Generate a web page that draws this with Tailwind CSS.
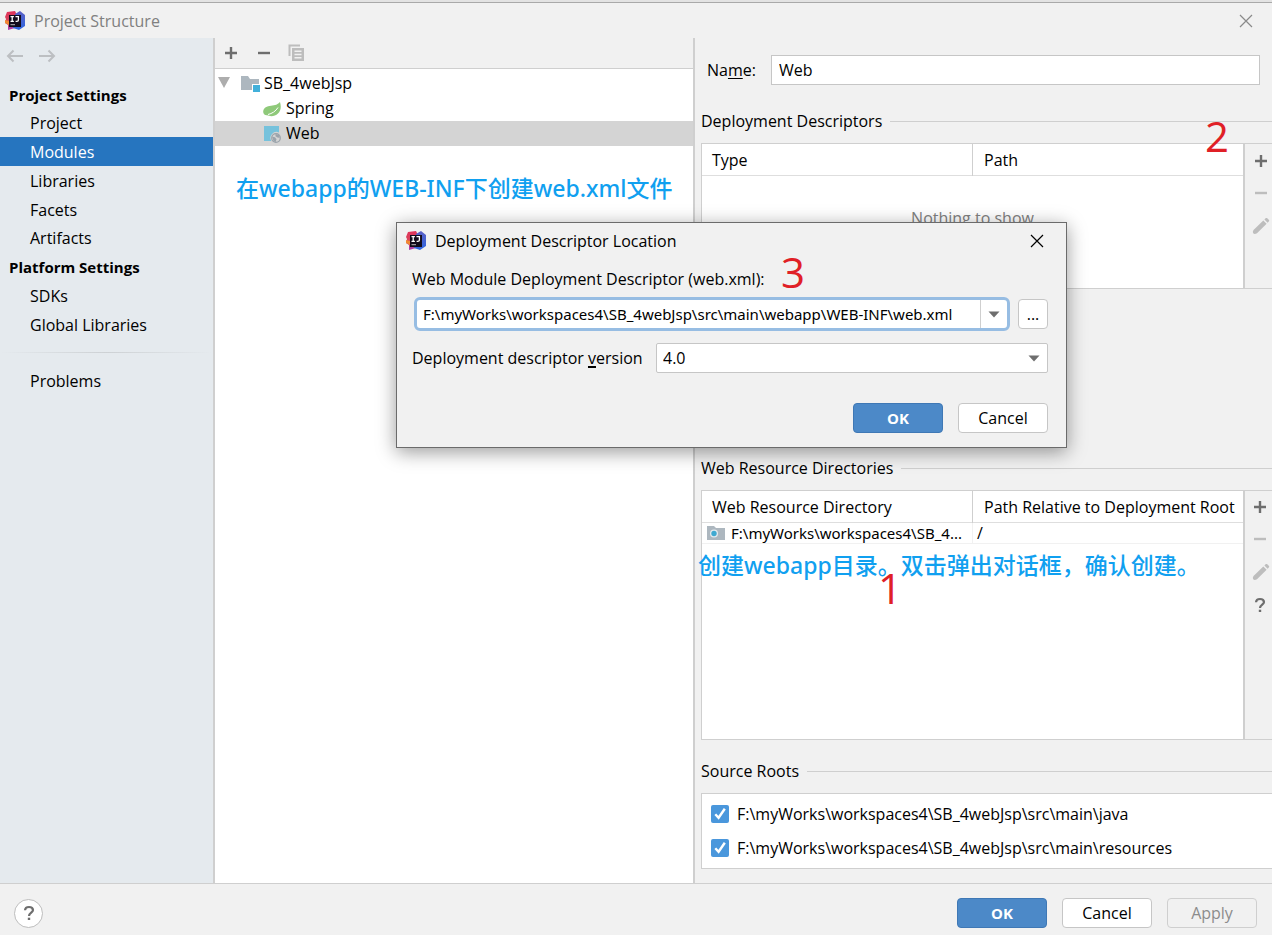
<!DOCTYPE html>
<html lang="en">
<head>
    <meta charset="UTF-8">
    <meta name="viewport" content="width=device-width, initial-scale=1.0">
    <title>Project Structure</title>
    <script src="https://cdn.jsdelivr.net/npm/@tailwindcss/browser@4"></script>
</head>
<body class="relative flex h-screen flex-col overflow-hidden bg-[#f1f1f1] font-['Open_Sans','Noto_Sans_CJK_SC',sans-serif] text-[16px] leading-5 text-black">

    <!-- shared icons -->
    <svg class="absolute size-0">
        <defs>
            <linearGradient id="ij-left" x1="0" y1="0" x2="0" y2="1">
                <stop offset="0" stop-color="#e0325c"/>
                <stop offset=".5" stop-color="#d8455a"/>
                <stop offset="1" stop-color="#a33bb5"/>
            </linearGradient>
            <linearGradient id="ij-right" x1="0" y1="0" x2="0" y2="1">
                <stop offset="0" stop-color="#5a5fc4"/>
                <stop offset="1" stop-color="#2f66e0"/>
            </linearGradient>
        </defs>
        <symbol id="idea" viewBox="0 0 20 20">
            <path fill="url(#ij-left)" d="M2 1l8-1 2 4-2 13-7 2V14L0 12l1-4-1-2z"/>
            <path fill="#f08a33" d="M0 9l4 1v4l-4-2z"/>
            <path fill="url(#ij-right)" d="M10 3l5-3 5 4v11l-6 4-6-2z"/>
            <path fill="#120c1c" d="M4 4h12v12H4z"/>
            <path fill="none" stroke="#fff" stroke-width="1.3" d="M5.500 5.700h3.400M7.200 5.700v4.600M5.500 10.300h3.400M10.500 5.700h2.900v3.200q0 1.400-1.600 1.400h-1.200"/>
            <path fill="#bbb" d="M5.500 13.200h4.500v1H5.500z"/>
        </symbol>
        <symbol id="plus" viewBox="0 0 14 14">
            <path fill="none" stroke="currentColor" stroke-width="2.4" d="M7 1v12M1 7h12"/>
        </symbol>
        <symbol id="minus" viewBox="0 0 14 14">
            <path fill="none" stroke="currentColor" stroke-width="2.4" d="M1 7h12"/>
        </symbol>
        <symbol id="pencil" viewBox="0 0 18 18">
            <path fill="currentColor" d="M11.300 3.400l3.300 3.300L5 16.300q-2.500 1.500-3.800 0-.9-1.500.3-3.300zM12.400 2.400l1.500-1.300q.6-.4 1.100 0l2 2q.4.600 0 1.100l-1.400 1.500z"/>
        </symbol>
        <symbol id="question" viewBox="0 0 12 16">
            <path fill="none" stroke="currentColor" stroke-width="2.2" d="M2 5.200Q2.200 2 6 2t4 3.100c0 2.400-4 2.800-4 6"/>
            <path fill="currentColor" d="M4.800 12.700h2.400V15H4.800z"/>
        </symbol>
        <symbol id="close" viewBox="0 0 14 14">
            <path fill="none" stroke="currentColor" stroke-width="1.2" d="M1 1l12 12M13 1L1 13"/>
        </symbol>
        <symbol id="caret" viewBox="0 0 12 7">
            <path fill="currentColor" d="M.5.5h11L6 6.500z"/>
        </symbol>
        <symbol id="tick" viewBox="0 0 18 18">
            <path fill="none" stroke="#fff" stroke-width="2.4" d="M4.300 9.200l3.300 3.600 6.200-9"/>
        </symbol>
    </svg>

    <!-- title bar -->
    <div class="h-[2px] shrink-0 bg-[#e3e3e3]"></div>
    <header class="flex h-9 shrink-0 items-center border-t border-[#a9a9a9] px-[5px]">
        <svg class="size-5"><use href="#idea"/></svg>
        <h1 class="ml-[9px] grow text-[#808080]">Project Structure</h1>
        <button aria-label="Close" class="mr-[14px] text-[#8a8a8a]"><svg class="size-[14px]"><use href="#close"/></svg></button>
    </header>

    <div class="flex min-h-0 grow">

        <!-- settings list -->
        <nav class="w-[215px] shrink-0 border-r-2 border-[#cfcfcf] bg-[#e5eaee]">
            <div class="flex h-[42px] items-start gap-4 px-[6px] pt-[11px] text-[#bcbfc2]">
                <button aria-label="Back"><svg class="h-[14px] w-[17px]" viewBox="0 0 17 14" fill="none" stroke="currentColor" stroke-width="2"><path d="M17 7H2M7.500 1.500L2 7l5.500 5.500"/></svg></button>
                <button aria-label="Forward"><svg class="h-[14px] w-[17px]" viewBox="0 0 17 14" fill="none" stroke="currentColor" stroke-width="2"><path d="M0 7h15M9.500 1.500L15 7l-5.500 5.500"/></svg></button>
            </div>
            <h2 class="flex h-7 items-center px-[9px] pt-[2px] text-[15px] font-bold">Project Settings</h2>
            <a href="#" class="flex h-[29px] items-center px-[30px]">Project</a>
            <a href="#" class="flex h-[29px] items-center bg-[#2675bf] px-[30px] text-white">Modules</a>
            <a href="#" class="flex h-[29px] items-center px-[30px]">Libraries</a>
            <a href="#" class="flex h-[29px] items-center px-[30px]">Facets</a>
            <a href="#" class="flex h-[29px] items-center px-[30px] pb-px">Artifacts</a>
            <h2 class="flex h-7 items-center px-[9px] text-[15px] font-bold">Platform Settings</h2>
            <a href="#" class="flex h-[29px] items-center px-[30px]">SDKs</a>
            <a href="#" class="flex h-[29px] items-center px-[30px]">Global Libraries</a>
            <div class="my-[13px] h-px bg-linear-to-r from-transparent via-[#cdd1d4] to-transparent"></div>
            <a href="#" class="flex h-[29px] items-center px-[30px]">Problems</a>
        </nav>

        <!-- module tree -->
        <section class="flex w-[480px] shrink-0 flex-col border-r-2 border-[#cfcfcf] bg-white">
            <div class="flex h-[31px] shrink-0 items-center gap-[19px] border-b border-[#cfcfcf] bg-[#f1f1f1] px-[9px] text-[#6e6e6e]">
                <button aria-label="Add"><svg class="size-[14px]"><use href="#plus"/></svg></button>
                <button aria-label="Remove"><svg class="size-[14px]"><use href="#minus"/></svg></button>
                <button aria-label="Copy" class="-ml-[2px] pb-[2px] text-[#bdbdbd]">
                    <svg class="size-[17px]" viewBox="0 0 17 17"><path fill="none" stroke="currentColor" stroke-width="2" d="M1.500 12V1.500H12"/><path fill="currentColor" fill-rule="evenodd" d="M4 4h12v13H4zM6.500 6.500v1.400h7V6.500zM6.500 9.800v1.400h7V9.800zM6.500 13v1.400h7V13z"/></svg>
                </button>
            </div>
            <ul class="pt-[2px]">
                <li class="flex h-[25px] items-center pb-[2px] pl-[3px]">
                    <svg class="h-[11px] w-3" viewBox="0 0 12 11"><path fill="#adadad" d="M0 0h12L6 11z"/></svg>
                    <svg class="mt-[2px] ml-[11px] size-[19px]" viewBox="0 0 19 19"><path fill="#adb7bf" d="M0 2h7l2 3h9v5h-7v6H0z"/><path fill="#42b0da" d="M12 11h7v7h-7z"/></svg>
                    <span class="ml-1">SB_4webJsp</span>
                </li>
                <li class="flex h-[25px] items-center pb-[2px] pl-12">
                    <svg class="mt-[2px] size-[18px]" viewBox="0 0 18 18"><path fill="#8fc97a" d="M17 2c1.500 5 .7 9-2 11.500-3 3-7.500 3.200-11 1.800C1.500 15.500 0 13.500.2 11.500.6 7.500 4 6.300 8 5.800 12 5.300 15 4.500 17 2z"/><path fill="none" stroke="#fff" d="M5 14.500C9 13.500 12.500 11.500 15 7.500"/></svg>
                    <span class="ml-[5px]">Spring</span>
                </li>
                <li class="flex h-[25px] items-center bg-[#d4d4d4] pb-[2px] pl-12">
                    <svg class="mt-[2px] size-[18px]" viewBox="0 0 18 18"><path fill="#76c2dc" d="M1 1h15v6.500A6 6 0 0 0 8.300 16H1z"/><circle cx="13" cy="13" r="4.300" fill="#d4d4d4" stroke="#9aa3ab" stroke-width="1.200"/><path fill="#9aa3ab" d="M9 11.500l3 .7 1.500 2-1 3-2-1.200zM12.500 9l3.500.8 1 2.700-2 .3-2.500-1.500z"/></svg>
                    <span class="ml-[5px]">Web</span>
                </li>
            </ul>
        </section>

        <!-- facet editor -->
        <main class="flex min-w-0 grow flex-col pt-[17px] pb-[14px] pl-[6px]">
            <div class="mr-3 flex items-center">
                <label for="name" class="w-[70px] pl-[6px]">Na<u class="underline-offset-2">m</u>e:</label>
                <input id="name" value="Web" class="h-[30px] min-w-0 grow border border-[#c6c6c6] bg-white px-[7px] outline-none">
            </div>

            <section class="mt-6 flex grow flex-col">
                <div class="flex h-6 items-center gap-2"><h2>Deployment Descriptors</h2><div class="h-px grow bg-[#cfcfcf]"></div></div>
                <div class="mt-[10px] flex h-[146px] border-y border-l border-[#cfcfcf]">
                    <div class="relative min-w-0 grow border-r-2 border-[#cfcfcf] bg-white">
                        <table class="w-full table-fixed text-left">
                            <thead>
                                <tr class="h-[31px] border-b border-[#dedede]">
                                    <th class="w-1/2 border-r border-[#cfcfcf] pt-px pl-[10px] font-normal">Type</th>
                                    <th class="pt-px pl-[11px] font-normal">Path</th>
                                </tr>
                            </thead>
                        </table>
                        <p class="mt-8 text-center text-[#808080]">Nothing to show</p>
                    </div>
                    <div class="flex w-[27px] shrink-0 flex-col items-end gap-[18px] pt-[10px] pr-1 text-[#bdbdbd]">
                        <button aria-label="Add descriptor" class="text-[#6e6e6e]"><svg class="size-[14px]"><use href="#plus"/></svg></button>
                        <button aria-label="Remove descriptor"><svg class="size-[14px]"><use href="#minus"/></svg></button>
                        <button aria-label="Edit descriptor" class="-mt-px -mr-[2px]"><svg class="size-[18px]"><use href="#pencil"/></svg></button>
                    </div>
                </div>
            </section>

            <section>
                <div class="flex h-6 items-center gap-2"><h2>Web Resource Directories</h2><div class="h-px grow bg-[#cfcfcf]"></div></div>
                <div class="mt-[10px] flex h-[250px] border-y border-l border-[#cfcfcf]">
                    <div class="min-w-0 grow border-r-2 border-[#cfcfcf] bg-white">
                        <table class="w-full table-fixed text-left">
                            <thead>
                                <tr class="h-[31px] border-b border-[#dedede]">
                                    <th class="w-1/2 border-r border-[#cfcfcf] pt-px pl-[10px] font-normal">Web Resource Directory</th>
                                    <th class="pt-px pl-[11px] font-normal whitespace-nowrap">Path Relative to Deployment Root</th>
                                </tr>
                            </thead>
                            <tbody>
                                <tr class="h-[21px] border-b border-[#f1f1f1]">
                                    <td class="border-r border-[#f1f1f1] pl-[5px]">
                                        <div class="flex items-center gap-[6px]">
                                            <svg class="h-[14px] w-[18px] shrink-0" viewBox="0 0 18 14"><path fill="#adb7bf" d="M0 0h7l2 2h9v12H0z"/><circle cx="7" cy="7.500" r="4" fill="#e4eaee"/><circle cx="7" cy="7.500" r="2.700" fill="#3fa9d1"/></svg>
                                            <span class="font-['Noto_Sans',sans-serif] text-[15px] whitespace-nowrap">F:\myWorks\workspaces4\SB_4...</span>
                                        </div>
                                    </td>
                                    <td class="pl-1">/</td>
                                </tr>
                            </tbody>
                        </table>
                    </div>
                    <div class="flex w-[27px] shrink-0 flex-col items-end gap-[18px] pt-[9px] pr-[5px] text-[#bdbdbd]">
                        <button aria-label="Add directory" class="text-[#6e6e6e]"><svg class="size-[14px]"><use href="#plus"/></svg></button>
                        <button aria-label="Remove directory"><svg class="size-[14px]"><use href="#minus"/></svg></button>
                        <button aria-label="Edit directory" class="-mt-px -mr-[3px]"><svg class="size-[18px]"><use href="#pencil"/></svg></button>
                        <button aria-label="Directory help" class="-mt-[2px] text-[#6e6e6e]"><svg class="h-4 w-[14px]"><use href="#question"/></svg></button>
                    </div>
                </div>
            </section>

            <section class="mt-[19px]">
                <div class="flex h-6 items-center gap-2"><h2>Source Roots</h2><div class="h-px grow bg-[#cfcfcf]"></div></div>
                <div class="mt-[10px] flex flex-col gap-[14px] border-y border-l border-[#cfcfcf] bg-white px-[9px] py-[10px]">
                    <label class="flex items-center gap-2">
                        <span class="grid"><input type="checkbox" checked class="col-start-1 row-start-1 size-[18px] appearance-none rounded-xs bg-[#4a97dc]"><svg class="pointer-events-none col-start-1 row-start-1 size-[18px]"><use href="#tick"/></svg></span>
                        F:\myWorks\workspaces4\SB_4webJsp\src\main\java
                    </label>
                    <label class="flex items-center gap-2">
                        <span class="grid"><input type="checkbox" checked class="col-start-1 row-start-1 size-[18px] appearance-none rounded-xs bg-[#4a97dc]"><svg class="pointer-events-none col-start-1 row-start-1 size-[18px]"><use href="#tick"/></svg></span>
                        F:\myWorks\workspaces4\SB_4webJsp\src\main\resources
                    </label>
                </div>
            </section>
        </main>
    </div>

    <!-- bottom buttons -->
    <footer class="flex h-[52px] shrink-0 items-center gap-[15px] border-t border-[#cfcfcf] pt-[11px] pr-[15px] pb-1 pl-[14px]">
        <button aria-label="Help" class="mr-auto flex size-[29px] items-center justify-center rounded-full border border-[#bdbdbd] bg-white text-[#6e6e6e]"><svg class="h-4 w-3"><use href="#question"/></svg></button>
        <button class="h-[30px] w-[90px] rounded border border-[#3f78b5] bg-[#4c89c8] text-[15px] font-bold text-white">OK</button>
        <button class="h-[30px] w-[90px] rounded border border-[#c6c6c6] bg-white">Cancel</button>
        <button disabled class="h-[30px] w-[90px] rounded border border-[#cfcfcf] text-[#8c8c8c]">Apply</button>
    </footer>

    <!-- descriptor dialog -->
    <div role="dialog" aria-labelledby="dialog-title" class="absolute top-[222px] left-[396px] w-[671px] border border-[#6b6b6b] bg-[#f1f1f1] shadow-[0_4px_18px_rgba(0,0,0,0.4)]">
        <div class="flex h-9 items-center pr-[22px] pl-[9px]">
            <svg class="size-5"><use href="#idea"/></svg>
            <h2 id="dialog-title" class="ml-[9px] grow">Deployment Descriptor Location</h2>
            <button aria-label="Close dialog"><svg class="size-[14px]"><use href="#close"/></svg></button>
        </div>
        <div class="px-[15px] pt-[10px] pb-[14px]">
            <label for="location" class="block">Web Module Deployment Descriptor (web.xml):</label>
            <div class="mt-2 flex items-center justify-between pr-[3px] pl-[2px]">
                <div class="flex h-[34px] w-[596px] rounded-md border-3 border-[#97bde3] bg-white">
                    <input id="location" value="F:\myWorks\workspaces4\SB_4webJsp\src\main\webapp\WEB-INF\web.xml" class="min-w-0 grow pl-[6px] font-['Noto_Sans',sans-serif] text-[15px] outline-none">
                    <button aria-label="Recent locations" class="flex w-[27px] shrink-0 items-center justify-center border-l border-[#cfcfcf] text-[#6e6e6e]"><svg class="h-[7px] w-3"><use href="#caret"/></svg></button>
                </div>
                <button aria-label="Browse" class="h-[30px] w-[30px] rounded border border-[#c6c6c6] bg-white">...</button>
            </div>
            <div class="mt-3 flex items-center pr-[3px]">
                <label for="version" class="w-[244px]">Deployment descriptor <u class="decoration-2 underline-offset-2">v</u>ersion</label>
                <div class="relative grow">
                    <select id="version" class="h-[30px] w-full appearance-none rounded-xs border border-[#c6c6c6] bg-white px-[6px] outline-none"><option>4.0</option></select>
                    <svg class="pointer-events-none absolute top-3 right-2 h-[7px] w-3 text-[#6e6e6e]"><use href="#caret"/></svg>
                </div>
            </div>
            <div class="mt-[30px] flex justify-end gap-[15px] pr-[3px]">
                <button class="h-[30px] w-[90px] rounded border border-[#3f78b5] bg-[#4c89c8] text-[15px] font-bold text-white">OK</button>
                <button class="h-[30px] w-[90px] rounded border border-[#c6c6c6] bg-white">Cancel</button>
            </div>
        </div>
    </div>

    <!-- notes drawn over the window -->
    <p class="absolute top-[172px] left-[236px] font-['Noto_Sans','Noto_Sans_CJK_SC',sans-serif] text-[23px] leading-8 font-medium whitespace-nowrap text-[#10a0f0]">在webapp的WEB-INF下创建web.xml文件</p>
    <p class="absolute top-[549px] left-[698px] font-['Noto_Sans','Noto_Sans_CJK_SC',sans-serif] text-[23px] leading-8 font-medium whitespace-nowrap text-[#10a0f0]">创建webapp目录。双击弹出对话框，确认创建。</p>
    <span class="absolute top-[568px] left-[878px] text-[42px] leading-10 text-[#e02026]">1</span>
    <span class="absolute top-[116px] left-[1205px] text-[42px] leading-10 text-[#e02026]">2</span>
    <span class="absolute top-[252px] left-[781px] text-[42px] leading-10 text-[#e02026]">3</span>
</body>
</html>
